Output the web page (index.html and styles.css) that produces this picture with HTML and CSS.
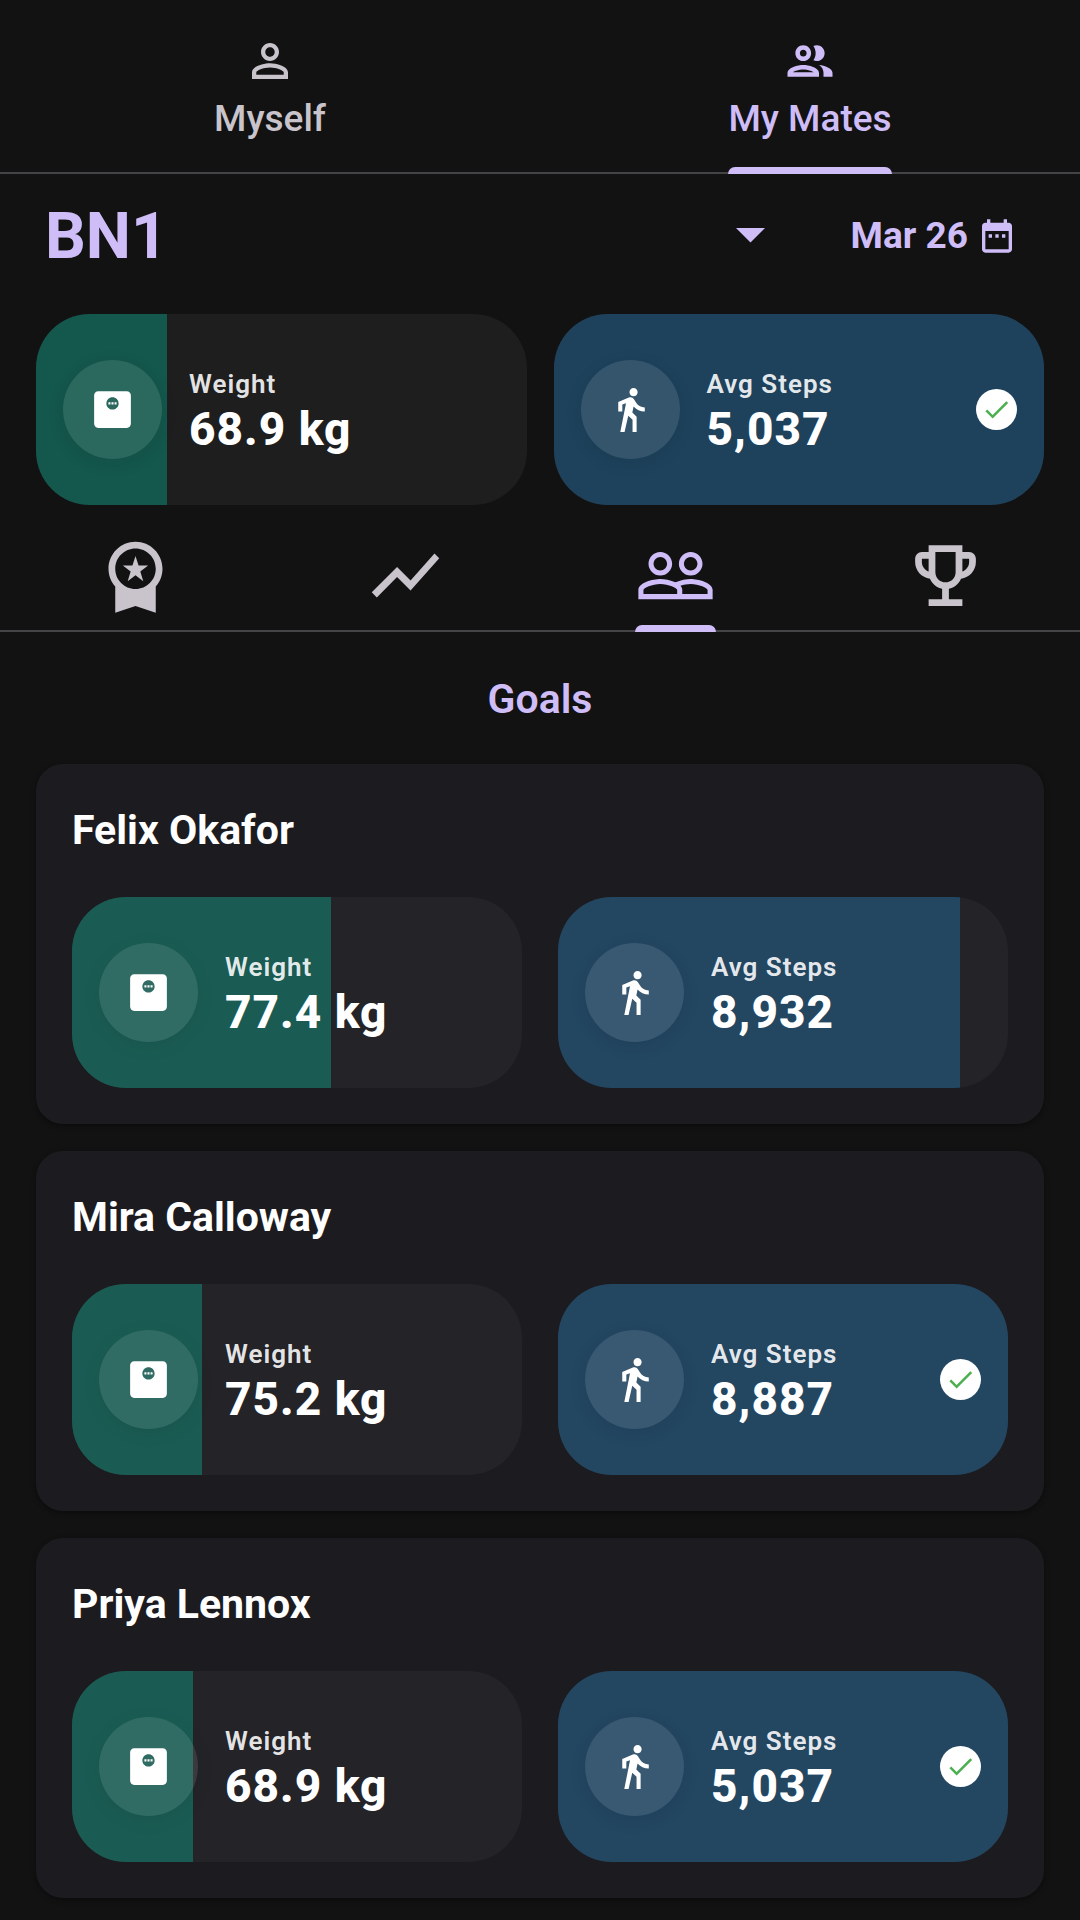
FILE: index.html
```html
<!doctype html>
<html lang="en">
<head>
    <meta charset="UTF-8">
    <meta name="viewport" content="width=device-width, initial-scale=1.0">
    <title>My Mates</title>
    <link rel="stylesheet" href="styles.css">
</head>
<body>

<!-- icons used more than once -->
<svg class="sprite" aria-hidden="true">
    <symbol id="scale" viewBox="0 0 24 24">
        <path fill-rule="evenodd" d="M19 3H5c-1.1 0-2 .9-2 2v14c0 1.1.9 2 2 2h14c1.1 0 2-.9 2-2V5c0-1.1-.9-2-2-2zm-7 9c-1.66 0-3-1.34-3-3s1.34-3 3-3 3 1.34 3 3-1.34 3-3 3z"/>
        <path d="M10 8.5h1v1h-1zM11.5 8.5h1v1h-1zM13 8.5h1v1h-1z"/>
    </symbol>
    <symbol id="walk" viewBox="0 0 24 24">
        <path d="M13.5 5.5c1.1 0 2-.9 2-2s-.9-2-2-2-2 .9-2 2 .9 2 2 2zM9.8 8.9L7 23h2.1l1.8-8 2.1 2v6h2v-7.5l-2.1-2 .6-3C14.8 12 16.8 13 19 13v-2c-1.9 0-3.5-1-4.3-2.4l-1-1.6c-.4-.6-1-1-1.7-1-.3 0-.5.1-.8.1L6 8.3V13h2V9.6l1.8-.7"/>
    </symbol>
    <symbol id="check" viewBox="0 0 24 24">
        <path d="M9 16.17L4.83 12l-1.42 1.41L9 19 21 7l-1.41-1.41L9 16.17z"/>
    </symbol>
</svg>

<nav class="tabs">
    <button class="tab" type="button">
        <svg class="tab_icon" viewBox="0 0 24 24"><path d="M12 5.9c1.16 0 2.1.94 2.1 2.1s-.94 2.1-2.1 2.1S9.9 9.16 9.9 8s.94-2.1 2.1-2.1m0 9c2.97 0 6.1 1.46 6.1 2.1v1.1H5.9V17c0-.64 3.13-2.1 6.1-2.1M12 4C9.79 4 8 5.79 8 8s1.79 4 4 4 4-1.79 4-4-1.79-4-4-4zm0 9c-2.67 0-8 1.34-8 4v3h16v-3c0-2.66-5.33-4-8-4z"/></svg>
        <span class="tab_label">Myself</span>
    </button>
    <button class="tab active" type="button">
        <svg class="tab_icon" viewBox="0 0 24 24"><path d="M9 13.75c-2.34 0-7 1.17-7 3.5V19h14v-1.75c0-2.33-4.66-3.5-7-3.5zM4.34 17c.84-.58 2.87-1.25 4.66-1.25s3.82.67 4.66 1.25H4.34zM9 12c1.93 0 3.5-1.57 3.5-3.5S10.93 5 9 5 5.5 6.57 5.5 8.5 7.07 12 9 12zm0-5c.83 0 1.5.67 1.5 1.5S9.83 10 9 10s-1.5-.67-1.5-1.5S8.17 7 9 7zm7.04 6.81c1.16.84 1.96 1.96 1.96 3.44V19h4v-1.75c0-2.02-3.5-3.17-5.96-3.44zM15 12c1.93 0 3.5-1.57 3.5-3.5S16.93 5 15 5c-.54 0-1.04.13-1.5.35.63.89 1 1.98 1 3.15s-.37 2.26-1 3.15c.46.22.96.35 1.5.35z"/></svg>
        <span class="tab_label">My Mates</span>
    </button>
</nav>

<header class="header">
    <div class="group">
        <select class="group_select" name="group" aria-label="Group">
            <option value="bn1" selected>BN1</option>
        </select>
        <svg class="group_arrow" viewBox="0 0 10 5"><path d="M0 0h10L5 5z"/></svg>
    </div>
    <button class="date" type="button">
        Mar 26
        <svg class="date_icon" viewBox="0 0 24 24"><path d="M9 11H7v2h2v-2zm4 0h-2v2h2v-2zm4 0h-2v2h2v-2zm2-7h-1V2h-2v2H8V2H6v2H5c-1.11 0-1.99.9-1.99 2L3 20c0 1.1.89 2 2 2h14c1.1 0 2-.9 2-2V6c0-1.1-.9-2-2-2zm0 16H5V9h14v11z"/></svg>
    </button>
</header>

<section class="stats summary">
    <div class="stat weight">
        <div class="stat_fill" style="width: 26.8%"></div>
        <div class="stat_icon"><svg><use href="#scale"/></svg></div>
        <div class="stat_text">
            <span class="stat_label">Weight</span>
            <span class="stat_value">68.9 kg</span>
        </div>
    </div>
    <div class="stat steps">
        <div class="stat_fill" style="width: 100%"></div>
        <div class="stat_icon"><svg><use href="#walk"/></svg></div>
        <div class="stat_text">
            <span class="stat_label">Avg Steps</span>
            <span class="stat_value">5,037</span>
        </div>
        <div class="stat_done"><svg><use href="#check"/></svg></div>
    </div>
</section>

<nav class="views">
    <button class="view" type="button" aria-label="Badges">
        <svg viewBox="0 0 24 24"><path d="M9.68 13.69L12 11.93l2.31 1.76-.88-2.85L15.75 9h-2.84L12 6.19 11.09 9H8.25l2.31 1.84-.88 2.85zM20 10c0-4.42-3.58-8-8-8s-8 3.58-8 8c0 2.03.76 3.87 2 5.28V23l6-2 6 2v-7.72c1.24-1.41 2-3.25 2-5.28zm-8-6c3.31 0 6 2.69 6 6s-2.69 6-6 6-6-2.69-6-6 2.69-6 6-6z" fill-rule="evenodd"/></svg>
    </button>
    <button class="view" type="button" aria-label="Trends">
        <svg viewBox="0 0 24 24"><path d="M3.5 18.49l6-6.01 4 4L22 6.92l-1.41-1.41-7.09 7.97-4-4L2 16.99z"/></svg>
    </button>
    <button class="view active" type="button" aria-label="Mates">
        <svg viewBox="0 0 24 24"><path d="M16.5 13c-1.2 0-3.07.34-4.5 1-1.43-.67-3.3-1-4.5-1C5.33 13 1 14.08 1 16.25V19h22v-2.75c0-2.17-4.33-3.25-6.5-3.25zm-4 4.5h-10v-1.25c0-.54 2.56-1.75 5-1.75s5 1.21 5 1.75v1.25zm9 0H14v-1.25c0-.46-.2-.86-.52-1.22.88-.3 1.96-.53 3.02-.53 2.44 0 5 1.21 5 1.75v1.25zM7.5 12c1.93 0 3.5-1.57 3.5-3.5S9.43 5 7.5 5 4 6.57 4 8.5 5.57 12 7.5 12zm0-5.5c1.1 0 2 .9 2 2s-.9 2-2 2-2-.9-2-2 .9-2 2-2zm9 5.5c1.93 0 3.5-1.57 3.5-3.5S18.43 5 16.5 5 13 6.57 13 8.5s1.57 3.5 3.5 3.5zm0-5.5c1.1 0 2 .9 2 2s-.9 2-2 2-2-.9-2-2 .9-2 2-2z"/></svg>
    </button>
    <button class="view" type="button" aria-label="Trophies">
        <svg viewBox="0 0 24 24"><path d="M19 5h-2V3H7v2H5c-1.1 0-2 .9-2 2v1c0 2.55 1.92 4.63 4.39 4.94.63 1.5 1.98 2.63 3.61 2.96V19H7v2h10v-2h-4v-3.1c1.63-.33 2.98-1.46 3.61-2.96C19.08 12.63 21 10.55 21 8V7c0-1.1-.9-2-2-2zM5 8V7h2v3.82C5.84 10.4 5 9.3 5 8zm7 6c-1.65 0-3-1.35-3-3V5h6v6c0 1.65-1.35 3-3 3zm7-6c0 1.3-.84 2.4-2 2.82V7h2v1z"/></svg>
    </button>
</nav>

<main class="goals">
    <h1 class="goals_title">Goals</h1>

    <article class="card">
        <h2 class="card_name">Felix Okafor</h2>
        <div class="stats">
            <div class="stat weight">
                <div class="stat_fill" style="width: 57.5%"></div>
                <div class="stat_icon"><svg><use href="#scale"/></svg></div>
                <div class="stat_text">
                    <span class="stat_label">Weight</span>
                    <span class="stat_value">77.4 kg</span>
                </div>
            </div>
            <div class="stat steps">
                <div class="stat_fill" style="width: 89.3%"></div>
                <div class="stat_icon"><svg><use href="#walk"/></svg></div>
                <div class="stat_text">
                    <span class="stat_label">Avg Steps</span>
                    <span class="stat_value">8,932</span>
                </div>
            </div>
        </div>
    </article>

    <article class="card">
        <h2 class="card_name">Mira Calloway</h2>
        <div class="stats">
            <div class="stat weight">
                <div class="stat_fill" style="width: 28.8%"></div>
                <div class="stat_icon"><svg><use href="#scale"/></svg></div>
                <div class="stat_text">
                    <span class="stat_label">Weight</span>
                    <span class="stat_value">75.2 kg</span>
                </div>
            </div>
            <div class="stat steps">
                <div class="stat_fill" style="width: 100%"></div>
                <div class="stat_icon"><svg><use href="#walk"/></svg></div>
                <div class="stat_text">
                    <span class="stat_label">Avg Steps</span>
                    <span class="stat_value">8,887</span>
                </div>
                <div class="stat_done"><svg><use href="#check"/></svg></div>
            </div>
        </div>
    </article>

    <article class="card">
        <h2 class="card_name">Priya Lennox</h2>
        <div class="stats">
            <div class="stat weight">
                <div class="stat_fill" style="width: 26.8%"></div>
                <div class="stat_icon"><svg><use href="#scale"/></svg></div>
                <div class="stat_text">
                    <span class="stat_label">Weight</span>
                    <span class="stat_value">68.9 kg</span>
                </div>
            </div>
            <div class="stat steps">
                <div class="stat_fill" style="width: 100%"></div>
                <div class="stat_icon"><svg><use href="#walk"/></svg></div>
                <div class="stat_text">
                    <span class="stat_label">Avg Steps</span>
                    <span class="stat_value">5,037</span>
                </div>
                <div class="stat_done"><svg><use href="#check"/></svg></div>
            </div>
        </div>
    </article>
</main>

</body>
</html>
```
FILE: styles.css
```css
* {
    box-sizing: border-box;
}

body {
    margin: 0;
    background-color: #121212;
    color: #fff;
    font-family: Roboto, "Liberation Sans", sans-serif;
}

button, select {
    margin: 0;
    padding: 0;
    border: 0;
    background: none;
    color: inherit;
    font: inherit;
    cursor: pointer;
}

svg {
    display: block;
    fill: currentColor;
}

.sprite {
    position: absolute;
    width: 0;
    height: 0;
}

/* top tabs */
.tabs {
    display: flex;
    border-bottom: 2px solid #444446;
}
.tab {
    flex: 1;
    display: flex;
    flex-direction: column;
    align-items: center;
    gap: 9px;
    padding-top: 34px;
    color: #c9c4cc;
}
.tab_icon {
    width: 54px;
    height: 54px;
}
.tab_label {
    position: relative;
    padding-bottom: 31px;
    font-size: 37px;
    font-weight: 500;
    line-height: 44px;
}
.tab.active, .view.active {
    color: #cfbdf8;
}
/* marker sits over the divider */
.tab.active .tab_label::after,
.view.active::after {
    content: '';
    position: absolute;
    left: 0;
    right: 0;
    bottom: -2px;
    height: 7px;
    border-radius: 7px 7px 0 0;
    background-color: #cfbdf8;
}

/* group and date */
.header {
    display: flex;
    align-items: center;
    justify-content: space-between;
    gap: 72px;
    padding: 25px 63px 42px 45px;
    color: #cfbdf8;
}
.group {
    flex: 1;
    display: grid;
    align-items: center;
}
.group_select, .group_arrow {
    grid-area: 1 / 1;
}
.group_select {
    appearance: none;
    width: 100%;
    height: 73px;
    font-size: 64px;
    font-weight: 700;
}
.group_select option {
    background-color: #1e1e1e;
    font-size: 37px;
}
.group_arrow {
    justify-self: end;
    width: 29px;
    margin-right: 14px;
    pointer-events: none;
}
.date {
    display: flex;
    align-items: center;
    gap: 9px;
    font-size: 37px;
    font-weight: 700;
    line-height: 44px;
}
.date_icon {
    width: 40px;
    height: 40px;
}

/* stat pills */
.stats {
    display: grid;
    grid-template-columns: 1fr 1fr;
    gap: 36px;
}
.stats.summary {
    gap: 27px;
    padding: 0 36px;
}
.stat {
    position: relative;
    display: flex;
    align-items: center;
    gap: 27px;
    padding: 46px 27px;
    border-radius: 54px;
    overflow: hidden;
    background-color: #242328;
}
.summary .stat {
    background-color: #1e1e1e;
}
/* progress lies under the pill content */
.stat_fill {
    position: absolute;
    top: 0;
    bottom: 0;
    left: 0;
}
.weight .stat_fill {
    background-color: #1a5c53;
}
.steps .stat_fill {
    background-color: #234661;
}
.summary .weight .stat_fill {
    background-color: #14574c;
}
.summary .steps .stat_fill {
    background-color: #1e425c;
}
.stat_icon, .stat_text, .stat_done {
    position: relative;
}
.stat_icon {
    flex: none;
    display: grid;
    place-items: center;
    width: 99px;
    height: 99px;
    border-radius: 50%;
    background-color: rgba(255, 255, 255, 0.1);
    box-shadow: 0 4px 18px rgba(0, 0, 0, 0.08);
}
.stat_icon svg {
    width: 49px;
    height: 49px;
}
.stat_text {
    flex: 1;
    display: flex;
    flex-direction: column;
    white-space: nowrap;
}
.stat_label {
    font-size: 26px;
    font-weight: 600;
    line-height: 40px;
    letter-spacing: 1px;
    color: rgba(255, 255, 255, 0.9);
}
.stat_value {
    font-size: 46px;
    font-weight: 800;
    line-height: 51px;
    letter-spacing: 1px;
}
.stat_done {
    flex: none;
    display: grid;
    place-items: center;
    width: 41px;
    height: 41px;
    border-radius: 50%;
    background-color: #fff;
    color: #4caf50;
}
.stat_done svg {
    width: 31px;
    height: 31px;
}

/* icon tabs */
.views {
    display: flex;
    border-bottom: 2px solid #444446;
}
.view {
    flex: 1;
    position: relative;
    display: flex;
    justify-content: center;
    padding: 30px 0 14px;
    color: #c9c4cc;
}
.view svg {
    width: 81px;
    height: 81px;
}
.view.active::after {
    left: 50%;
    right: auto;
    width: 81px;
    margin-left: -40px;
}

/* goals list */
.goals {
    display: flex;
    flex-direction: column;
    gap: 27px;
    padding: 40px 36px 20px;
}
.goals_title {
    margin: 0 0 11px;
    color: #cfbdf8;
    font-size: 41px;
    font-weight: 600;
    line-height: 54px;
    text-align: center;
}
.card {
    padding: 36px;
    border-radius: 27px;
    background-color: #1c1b1f;
    box-shadow: 0 2px 5px rgba(0, 0, 0, 0.4);
}
.card_name {
    margin: 0 0 36px;
    font-size: 41px;
    font-weight: 700;
    line-height: 61px;
}
```
